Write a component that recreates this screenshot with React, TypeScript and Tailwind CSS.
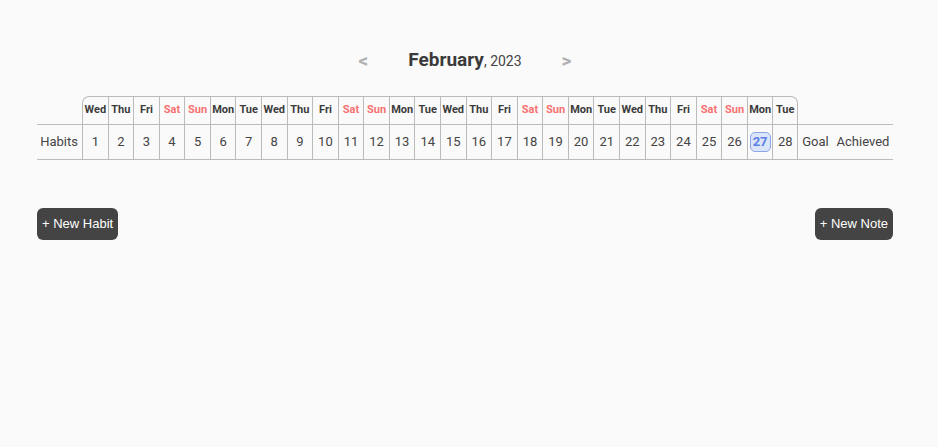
import React from 'react';

const dayNames = ['Sun', 'Mon', 'Tue', 'Wed', 'Thu', 'Fri', 'Sat'];

// February 2023 starts on a Wednesday
const days = Array.from({ length: 28 }, (_, i) => {
  const dow = (3 + i) % 7;
  return { date: i + 1, name: dayNames[dow], weekend: dow === 0 || dow === 6 };
});

const TODAY = 27;

const App = () => {
  return (
    <div className="min-h-screen w-full bg-[#fafafa] font-['Roboto',sans-serif] text-[#444]">
      <div className="px-[37px] pt-[46px] w-[930px]">
        <div className="flex items-center justify-center h-[28px] w-[856px]">
          <button className="text-[#b0b0b0] text-[19px] font-bold mr-[40px] leading-none">&lt;</button>
          <div className="flex items-baseline">
            <span className="text-[19px] font-bold text-[#3a3a3a]">February</span>
            <span className="text-[14px] text-[#444]">, 2023</span>
          </div>
          <button className="text-[#b0b0b0] text-[19px] font-bold ml-[40px] leading-none">&gt;</button>
        </div>

        <div className="mt-[22px] w-[856px]">
          <div className="grid grid-cols-[45px_repeat(28,minmax(0,1fr))_35px_60px] h-[28px]">
            <div />
            {days.map((d, i) => (
              <div
                key={d.date}
                className={`flex items-center justify-center border-t border-l border-[#bbb] text-[11px] font-bold ${
                  d.weekend ? 'text-[#f87171]' : 'text-[#3c3c3c]'
                } ${i === 0 ? 'rounded-tl-[7px]' : ''} ${
                  i === 27 ? 'border-r rounded-tr-[7px]' : ''
                }`}
              >
                {d.name}
              </div>
            ))}
            <div />
            <div />
          </div>
          <div className="grid grid-cols-[45px_repeat(28,minmax(0,1fr))_35px_60px] h-[36px] border-t border-b border-[#bbb] text-[13px]">
            <div className="flex items-center justify-end pr-[4px]">Habits</div>
            {days.map((d, i) => (
              <div
                key={d.date}
                className={`flex items-center justify-center border-l border-[#bbb] ${
                  i === 27 ? 'border-r' : ''
                }`}
              >
                {d.date === TODAY ? (
                  <span className="flex items-center justify-center w-[21px] h-[20px] rounded-[5px] border border-[#8aa6e8] bg-[#dbe5fa] text-[#5b7fe0] font-bold">
                    {d.date}
                  </span>
                ) : (
                  d.date
                )}
              </div>
            ))}
            <div className="flex items-center justify-center">Goal</div>
            <div className="flex items-center justify-center">Achieved</div>
          </div>
        </div>

        <div className="mt-[48px] flex justify-between w-[856px]">
          <button className="h-[32px] px-[5px] rounded-[6px] bg-[#444] text-white text-[13px] font-['Liberation_Sans',sans-serif]">
            + New Habit
          </button>
          <button className="h-[32px] px-[5px] rounded-[6px] bg-[#444] text-white text-[13px] font-['Liberation_Sans',sans-serif]">
            + New Note
          </button>
        </div>
      </div>
    </div>
  );
};

export default App;
